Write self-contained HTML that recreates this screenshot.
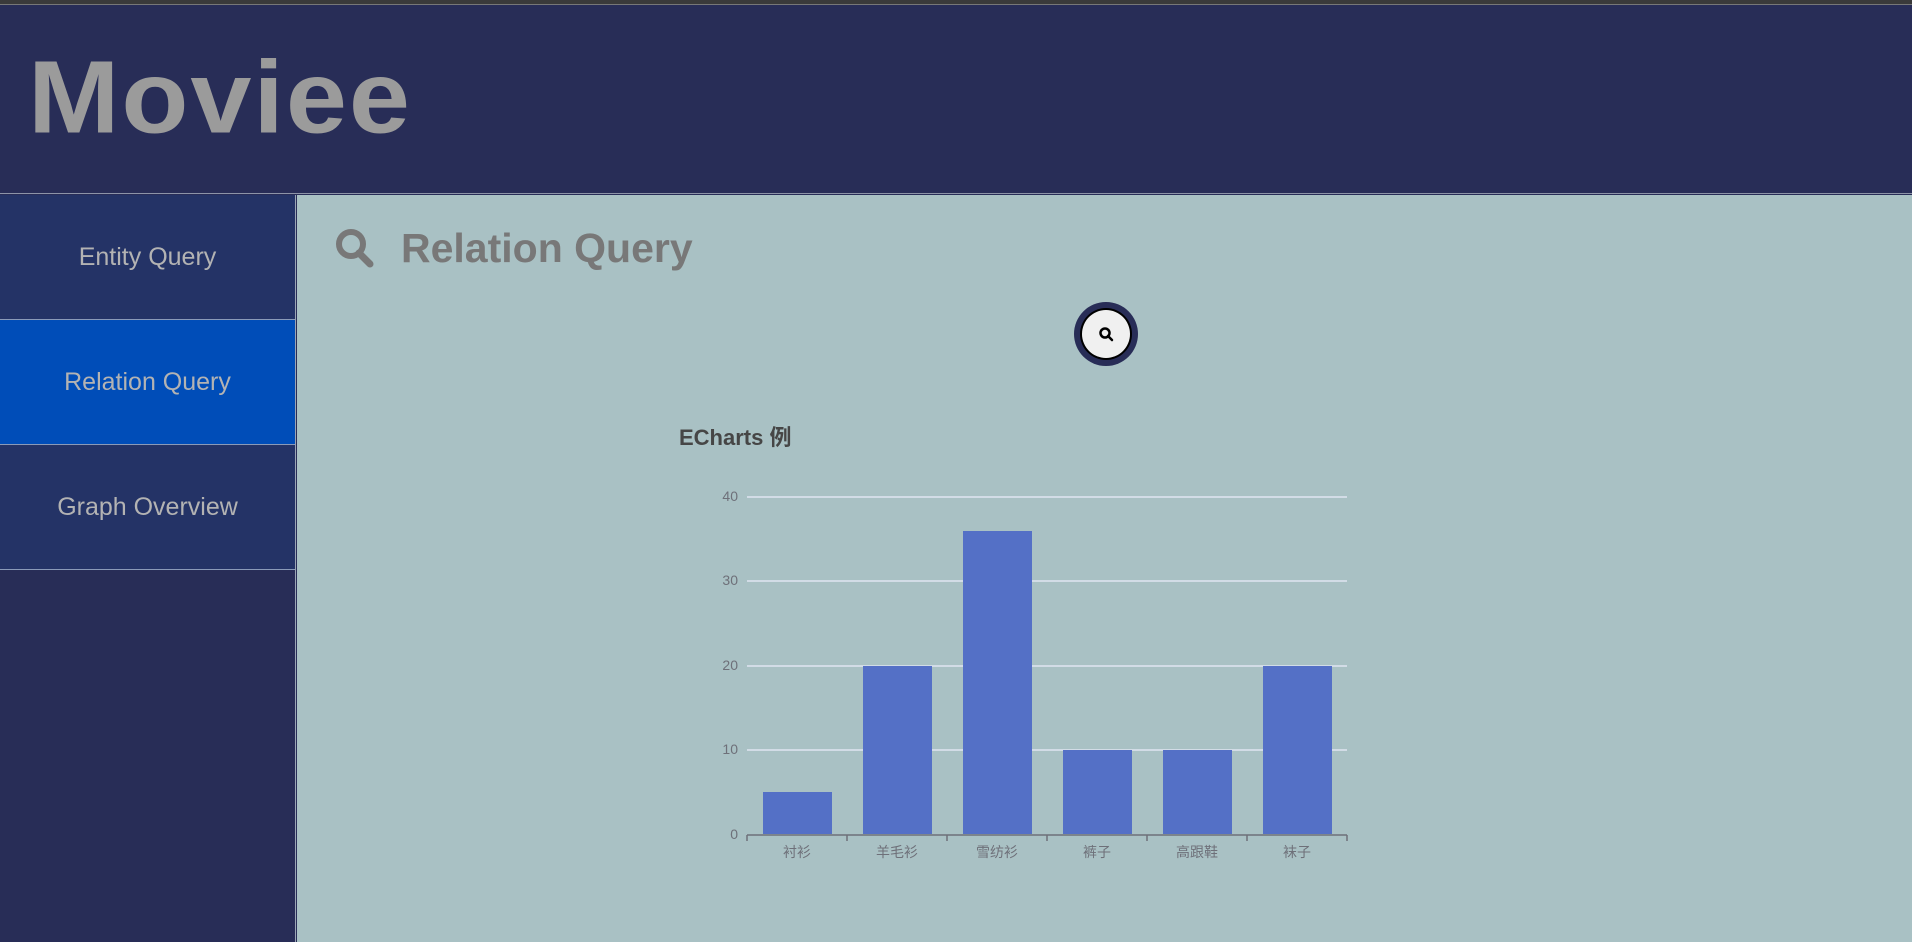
<!DOCTYPE html>
<html><head><meta charset="utf-8"><style>
*{margin:0;padding:0;box-sizing:border-box}
body{width:1912px;height:942px;overflow:hidden;background:#282d57;position:relative;font-family:"Liberation Sans","Noto Sans CJK SC",sans-serif}
.top{position:absolute;left:0;top:0;width:1912px;height:5px;background:#3a3a3a;border-bottom:1px solid #777}
.header{position:absolute;left:0;top:6px;width:1912px;height:188px;background:#282d57;border-bottom:1px solid #8d94a8}
.logo{position:absolute;left:28px;top:40px;font-size:112px;font-weight:bold;color:#9b9b9b;letter-spacing:2px;line-height:1;transform:scale(0.98,0.92);transform-origin:left top}
.side{position:absolute;left:0;top:195px;width:296px;height:747px;background:#282d57;border-right:1px solid #9aa4b4}
.nav{height:125px;border-bottom:1px solid #8a9ab8;color:#b3b3b3;font-size:25px;display:flex;align-items:center;justify-content:center;background:#243366}
.nav.act{background:#004db8}
.main{position:absolute;left:297px;top:195px;width:1615px;height:747px;background:#a9c1c4}
.title{position:absolute;left:401px;top:225px;font-size:41px;font-weight:bold;color:#787878;font-family:"Liberation Sans",sans-serif}
</style></head><body>
<div class="top"></div>
<div class="header"><div class="logo">Moviee</div></div>
<div class="side">
<div class="nav">Entity Query</div>
<div class="nav act">Relation Query</div>
<div class="nav">Graph Overview</div>
</div>
<div class="main"></div>
<div class="title">Relation Query</div>
<svg width="1912" height="942" style="position:absolute;left:0;top:0">
<circle cx="351" cy="244" r="12" fill="none" stroke="#787878" stroke-width="6"/>
<line x1="359" y1="253" x2="370" y2="264" stroke="#787878" stroke-width="7" stroke-linecap="round"/>
<circle cx="1106" cy="334" r="32" fill="#282d57"/>
<circle cx="1106" cy="334" r="26" fill="#000"/>
<circle cx="1106" cy="334" r="24" fill="#f0f0f0"/>
<circle cx="1105" cy="333" r="4.5" fill="none" stroke="#000" stroke-width="2.5"/>
<line x1="1108" y1="336" x2="1112" y2="340" stroke="#000" stroke-width="2.5" stroke-linecap="round"/>
<text x="679" y="445" font-size="22" font-weight="bold" fill="#464646" font-family="Liberation Sans,Noto Sans CJK SC,sans-serif">ECharts 例</text>
<g stroke="#e0e6f1" stroke-width="1.5">
<line x1="747" y1="497" x2="1347" y2="497"/>
<line x1="747" y1="581" x2="1347" y2="581"/>
<line x1="747" y1="666" x2="1347" y2="666"/>
<line x1="747" y1="750" x2="1347" y2="750"/>
</g>
<g font-size="14" fill="#6e7079" text-anchor="end" font-family="Liberation Sans,sans-serif">
<text x="738" y="501">40</text><text x="738" y="585">30</text><text x="738" y="670">20</text><text x="738" y="754">10</text><text x="738" y="839">0</text>
</g>
<g fill="#5470c6">
<rect x="763" y="792" width="69" height="42"/>
<rect x="863" y="666" width="69" height="168"/>
<rect x="963" y="531" width="69" height="303"/>
<rect x="1063" y="750" width="69" height="84"/>
<rect x="1163" y="750" width="69" height="84"/>
<rect x="1263" y="666" width="69" height="168"/>
</g>
<g stroke="#6e7079" stroke-width="1.5">
<line x1="747" y1="835" x2="1347" y2="835"/>
<line x1="747" y1="835" x2="747" y2="841"/><line x1="847" y1="835" x2="847" y2="841"/><line x1="947" y1="835" x2="947" y2="841"/><line x1="1047" y1="835" x2="1047" y2="841"/><line x1="1147" y1="835" x2="1147" y2="841"/><line x1="1247" y1="835" x2="1247" y2="841"/><line x1="1347" y1="835" x2="1347" y2="841"/>
</g>
<g font-size="14" fill="#6e7079" text-anchor="middle" font-family="Noto Sans CJK SC,sans-serif">
<text x="797" y="857">衬衫</text><text x="897" y="857">羊毛衫</text><text x="997" y="857">雪纺衫</text><text x="1097" y="857">裤子</text><text x="1197" y="857">高跟鞋</text><text x="1297" y="857">袜子</text>
</g>
</svg>
</body></html>
